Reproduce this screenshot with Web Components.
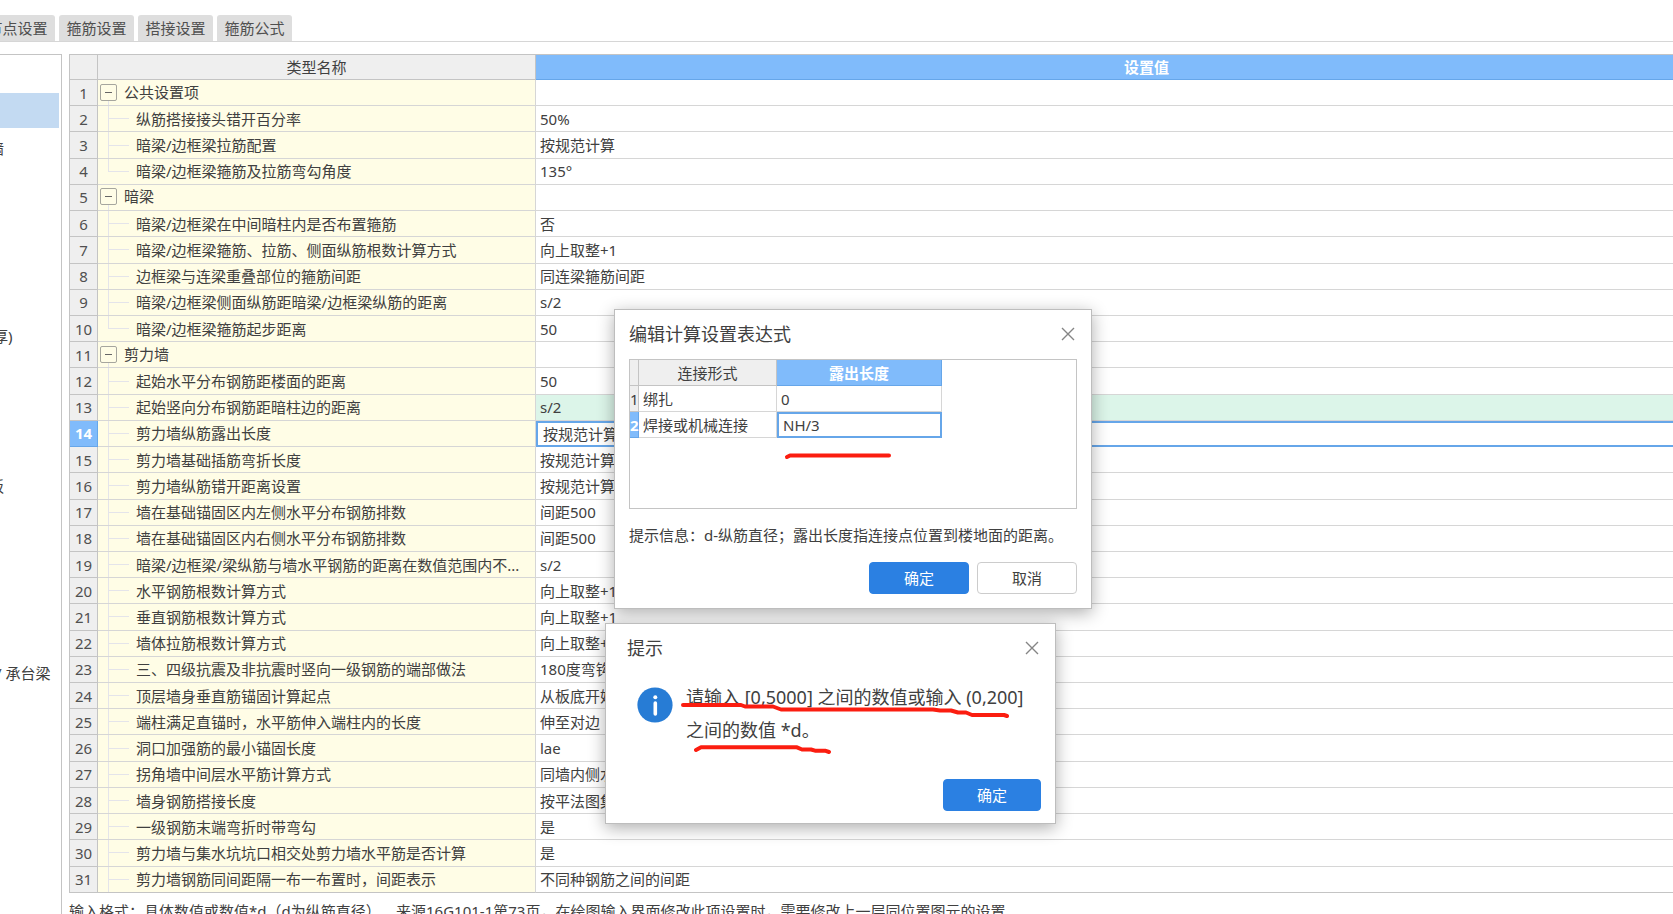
<!DOCTYPE html>
<html lang="zh-CN">
<head>
<meta charset="utf-8">
<title>计算设置</title>
<style>
html, body { margin: 0; height: 100%; }
body {
  overflow: hidden;
  background: #fff;
  color: #404040;
  font: 15px/20px "Noto Sans", "Noto Sans CJK SC", sans-serif;
  --line: #d6d6d6;
  --frame: #c4c4c4;
  --head: #efefef;
  --accent: #80bbfb;
  --accent-line: #66a6e9;
  --primary: #2b80e2;
}
</style>
</head>
<body>
<settings-app></settings-app>

<script>
class BaseElement extends HTMLElement {
  render(html) {
    if (!this.shadowRoot) this.attachShadow({ mode: "open" });
    this.shadowRoot.innerHTML = "<style>*,*::before{box-sizing:border-box}</style>" + html;
  }
}

customElements.define("tab-bar", class extends BaseElement {
  connectedCallback() {
    const tabs = ["节点设置", "箍筋设置", "搭接设置", "箍筋公式"];
    this.render(`
      <style>
        :host { display: block; flex: none; padding-top: 15px; border-bottom: 1px solid var(--line); }
        nav { display: flex; gap: 4px; margin-left: -20px; }
        button {
          width: 75px; height: 26px; padding: 0; border: 0;
          border-radius: 3px 3px 0 0; background: #dedede;
          color: #505050; font: inherit; white-space: nowrap;
        }
      </style>
      <nav>${tabs.map(t => `<button type="button">${t}</button>`).join("")}</nav>`);
  }
});

customElements.define("component-tree", class extends BaseElement {
  connectedCallback() {
    const labels = { 2: ["墙", "far"], 7: ["厚)", "mid"], 11: ["板", "far"], 16: ["/ 承台梁", "near"] };
    let items = "";
    for (let i = 0; i < 23; i++) {
      const [text, cls] = labels[i] || ["", ""];
      items += `<li class="${i === 1 ? "selected" : cls}">${text}</li>`;
    }
    this.render(`
      <style>
        :host {
          display: block; flex: 0 0 62px; overflow: hidden;
          border-top: 1px solid var(--frame); border-right: 1px solid var(--frame);
        }
        ul { margin: 0; padding: 0; list-style: none; }
        li { height: 38px; line-height: 36px; white-space: nowrap; }
        li:nth-child(even) { height: 37px; }
        .far { margin-left: -11px; }
        .mid { margin-left: -7px; }
        .near { margin-left: -4px; }
        .selected { background: #c3daf2 content-box; padding-bottom: 2px; margin-right: 2px; }
      </style>
      <ul>${items}</ul>`);
  }
});

const ROWS = [
  ["公共设置项", "", "group"],
  ["纵筋搭接接头错开百分率", "50%"],
  ["暗梁/边框梁拉筋配置", "按规范计算"],
  ["暗梁/边框梁箍筋及拉筋弯勾角度", "135°", "last"],
  ["暗梁", "", "group"],
  ["暗梁/边框梁在中间暗柱内是否布置箍筋", "否"],
  ["暗梁/边框梁箍筋、拉筋、侧面纵筋根数计算方式", "向上取整+1"],
  ["边框梁与连梁重叠部位的箍筋间距", "同连梁箍筋间距"],
  ["暗梁/边框梁侧面纵筋距暗梁/边框梁纵筋的距离", "s/2"],
  ["暗梁/边框梁箍筋起步距离", "50", "last"],
  ["剪力墙", "", "group"],
  ["起始水平分布钢筋距楼面的距离", "50"],
  ["起始竖向分布钢筋距暗柱边的距离", "s/2", "changed"],
  ["剪力墙纵筋露出长度", "按规范计算", "current"],
  ["剪力墙基础插筋弯折长度", "按规范计算"],
  ["剪力墙纵筋错开距离设置", "按规范计算"],
  ["墙在基础锚固区内左侧水平分布钢筋排数", "间距500"],
  ["墙在基础锚固区内右侧水平分布钢筋排数", "间距500"],
  ["暗梁/边框梁/梁纵筋与墙水平钢筋的距离在数值范围内不...", "s/2"],
  ["水平钢筋根数计算方式", "向上取整+1"],
  ["垂直钢筋根数计算方式", "向上取整+1"],
  ["墙体拉筋根数计算方式", "向上取整+1"],
  ["三、四级抗震及非抗震时竖向一级钢筋的端部做法", "180度弯钩"],
  ["顶层墙身垂直筋锚固计算起点", "从板底开始"],
  ["端柱满足直锚时，水平筋伸入端柱内的长度", "伸至对边"],
  ["洞口加强筋的最小锚固长度", "lae"],
  ["拐角墙中间层水平筋计算方式", "同墙内侧水"],
  ["墙身钢筋搭接长度", "按平法图集"],
  ["一级钢筋末端弯折时带弯勾", "是"],
  ["剪力墙与集水坑坑口相交处剪力墙水平筋是否计算", "是"],
  ["剪力墙钢筋同间距隔一布一布置时，间距表示", "不同种钢筋之间的间距"]
];

customElements.define("settings-grid", class extends BaseElement {
  connectedCallback() {
    const body = ROWS.map(([name, value, kind = ""], i) => {
      const toggle = kind === "group"
        ? `<button type="button" aria-label="折叠${name}"></button>` : "";
      const cell = kind === "current"
        ? `<input type="text" aria-label="${name}" value="${value}">` : value;
      return `<tr class="${kind}"><th scope="row">${i + 1}</th><td class="name">${toggle}${name}</td><td class="value">${cell}</td></tr>`;
    }).join("");
    this.render(`
      <style>
        :host { display: block; flex: 1; min-height: 0; }
        table {
          width: 100%; height: 100%; table-layout: fixed;
          border-collapse: separate; border-spacing: 0;
          border: solid var(--frame); border-width: 1px 0 0 1px;
        }
        .c-num { width: 28px; } .c-name { width: 438px; }
        th, td {
          height: 26px; padding: 0; font-weight: 400; white-space: nowrap;
          border-right: 1px solid var(--line); border-bottom: 1px solid var(--line);
        }
        thead th { height: 25px; background: var(--head); border-color: var(--frame); }
        thead th.active { background: var(--accent); color: #fff; font-weight: 700; border-color: var(--accent-line); }
        tbody th { background: var(--head); border-color: var(--frame); color: #505050; }
        tr:last-child td { border-bottom-color: var(--frame); }
        .name {
          position: relative; padding-left: 38px;
          background:
            linear-gradient(#e4e4ea, #e4e4ea) 10px 0 / 1px 100% no-repeat,
            linear-gradient(#e4e4ea, #e4e4ea) 10px 50% / 21px 1px no-repeat, #fffde6;
        }
        .last .name { background-size: 1px 50%, 21px 1px, auto; }
        .group .name {
          padding-left: 2px;
          background: linear-gradient(#e4e4ea, #e4e4ea) 10px 100% / 1px 5px no-repeat, #fffde6;
        }
        .name button {
          width: 17px; height: 17px; margin: 0 7px 0 0; padding: 0; vertical-align: -2px;
          border: 1px solid #a6a69e; border-radius: 2px;
          background: linear-gradient(#666, #666) 50% 50% / 7px 1px no-repeat;
        }
        .group .name { padding-bottom: 2px; }
        .value { padding-left: 4px; }
        .changed .value { background: #dcf5e9; }
        .current th { background: var(--accent); color: #fff; font-weight: 700; border-color: var(--accent-line); }
        .current .value { padding: 0; border: 2px solid var(--accent-line); border-right: 0; }
        input {
          display: block; width: 100%; height: 20px; border: 0; padding: 0 5px; outline: 0;
          background: none; color: inherit; font: inherit;
        }
      </style>
      <table>
        <colgroup><col class="c-num"><col class="c-name"><col></colgroup>
        <thead><tr><th></th><th scope="col">类型名称</th><th scope="col" class="active">设置值</th></tr></thead>
        <tbody>${body}</tbody>
      </table>`);
  }
});

customElements.define("action-button", class extends BaseElement {
  connectedCallback() {
    this.render(`
      <style>
        :host { display: block; width: 100px; }
        button {
          display: block; width: 100%; height: 32px; padding: 0; border: 1px solid #ccc;
          border-radius: 4px; background: #fff; color: inherit; font: inherit;
        }
        :host([primary]) button { border-color: var(--primary); background: var(--primary); color: #fff; }
      </style>
      <button type="button"><slot></slot></button>`);
  }
});

customElements.define("app-dialog", class extends BaseElement {
  connectedCallback() {
    this.render(`
      <style>
        :host {
          display: flex; flex-direction: column; position: absolute;
          border: 1px solid #bdbdbd; background: #fff;
          box-shadow: 0 4px 16px rgba(0, 0, 0, .32);
        }
        header { display: flex; justify-content: space-between; align-items: center; height: 47px; margin-bottom: 2px; flex: none; }
        h2 { margin: 0; font-size: 18px; line-height: 24px; font-weight: 400; }
        header button { width: 18px; height: 18px; padding: 0; border: 0; background: none; }
        svg { display: block; }
        footer { display: flex; justify-content: flex-end; gap: 8px; margin-top: auto; }
      </style>
      <header>
        <h2>${this.getAttribute("heading")}</h2>
        <button type="button" aria-label="关闭">
          <svg width="18" height="18" viewBox="0 0 18 18"><path d="M3 3L15 15M15 3L3 15" stroke="#858585" stroke-width="1.4"/></svg>
        </button>
      </header>
      <slot></slot>
      <footer><slot name="actions"></slot></footer>`);
  }
});

customElements.define("expression-table", class extends BaseElement {
  connectedCallback() {
    this.render(`
      <style>
        :host { display: block; height: 150px; border: 1px solid var(--frame); }
        table { width: 312px; table-layout: fixed; border-collapse: separate; border-spacing: 0; }
        th, td {
          height: 26px; padding: 0; font-weight: 400; text-align: left; white-space: nowrap;
          border-right: 1px solid var(--line); border-bottom: 1px solid var(--line);
        }
        thead th { background: var(--head); border-color: var(--frame); text-align: center; }
        thead th.active { background: var(--accent); color: #fff; font-weight: 700; border-color: var(--accent-line); }
        tbody th { background: var(--head); border-color: var(--frame); }
        td { padding-left: 4px; }
        .current th { background: var(--accent); color: #fff; font-weight: 700; border-color: var(--accent-line); }
        .edit { padding: 0; border: 2px solid var(--accent-line); }
        input { display: block; width: 100%; height: 22px; border: 0; padding: 0 4px; outline: 0; background: none; color: inherit; font: inherit; }
      </style>
      <table>
        <colgroup><col style="width:9px"><col style="width:138px"><col></colgroup>
        <thead><tr><th></th><th scope="col">连接形式</th><th scope="col" class="active">露出长度</th></tr></thead>
        <tbody>
          <tr><th scope="row">1</th><td>绑扎</td><td>0</td></tr>
          <tr class="current"><th scope="row">2</th><td>焊接或机械连接</td><td class="edit"><input type="text" aria-label="露出长度" value="NH/3"></td></tr>
        </tbody>
      </table>`);
  }
});

customElements.define("info-message", class extends BaseElement {
  connectedCallback() {
    this.render(`
      <style>
        :host { display: flex; gap: 13px; padding: 8px 0 0 10px; font-size: 18px; line-height: 33px; white-space: nowrap; }
        svg { flex: none; margin-top: 6px; }
        p { margin: 0; }
      </style>
      <svg width="36" height="36" viewBox="0 0 36 36" aria-hidden="true">
        <circle cx="18" cy="18" r="17.6" fill="#277cd5"/>
        <circle cx="18.3" cy="10.3" r="2" fill="#fff"/>
        <path d="M18.3 16V27" stroke="#fff" stroke-width="3.6" stroke-linecap="round"/>
      </svg>
      <p><slot></slot></p>`);
  }
});

customElements.define("pen-marks", class extends BaseElement {
  connectedCallback() {
    this.render(`
      <style>
        :host { display: block; position: absolute; top: 0; left: 0; pointer-events: none; }
        svg { display: block; }
      </style>
      <svg width="1100" height="800" viewBox="0 0 1100 800" fill="none" stroke="#fb1d10" stroke-width="4" stroke-linecap="round" stroke-linejoin="round" aria-hidden="true">
        <path d="M787 457L790 455.5H889"/>
        <path d="M683 705H741L745 706.5H773L781 709.5H933L940 710.5H951L958 712.5H966L972 715H1004L1007 716"/>
        <path d="M696 750L701 747.3H797L802 749.5H811L815 750.7H825L829 752"/>
      </svg>`);
  }
});

customElements.define("settings-app", class extends BaseElement {
  connectedCallback() {
    this.render(`
      <style>
        :host { display: flex; flex-direction: column; position: relative; height: 100vh; overflow: hidden; }
        .work { display: flex; flex: 1; min-height: 0; gap: 7px; padding-top: 12px; }
        main { display: flex; flex: 1; flex-direction: column; min-width: 0; margin-right: -85px; }
        .note { flex: none; height: 21px; margin: 0; padding-top: 8px; white-space: nowrap; }
        .expression { left: 614px; top: 309px; width: 478px; height: 300px; padding: 0 14px 14px; }
        .expression p { margin: 16px 0 0; white-space: nowrap; }
        .prompt { left: 605px; top: 623px; width: 451px; height: 201px; padding: 0 14px 12px 21px; }
        .prompt action-button { width: 98px; }
      </style>
      <tab-bar></tab-bar>
      <div class="work">
        <component-tree></component-tree>
        <main>
          <settings-grid></settings-grid>
          <p class="note">输入格式：具体数值或数值*d（d为纵筋直径）。&nbsp; 来源16G101-1第73页，在绘图输入界面修改此项设置时，需要修改上一层同位置图元的设置。</p>
        </main>
      </div>
      <app-dialog class="expression" role="dialog" heading="编辑计算设置表达式">
        <expression-table></expression-table>
        <p>提示信息：d-纵筋直径；露出长度指连接点位置到楼地面的距离。</p>
        <action-button slot="actions" primary>确定</action-button>
        <action-button slot="actions">取消</action-button>
      </app-dialog>
      <app-dialog class="prompt" role="dialog" heading="提示">
        <info-message>请输入 [0,5000] 之间的数值或输入 (0,200]<br>之间的数值 *d。</info-message>
        <action-button slot="actions" primary>确定</action-button>
      </app-dialog>
      <pen-marks></pen-marks>`);
  }
});
</script>
</body>
</html>
